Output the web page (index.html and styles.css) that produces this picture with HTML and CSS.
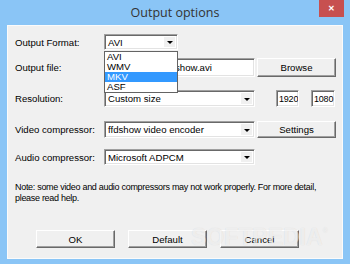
FILE: index.html
```html
<!DOCTYPE html>
<html>
<head>
    <title>Output options</title>
    <meta charset="utf-8" />
    <link rel="stylesheet" href="styles.css">
</head>
<body>
    <div class="window">
        <div class="titlebar">
            <span class="title">Output options</span>
            <div class="close">&#x2715;</div>
        </div>
        <div class="client">
            <div class="row r1">
                <span class="lbl">Output Format:</span>
                <div class="field combo w-short">AVI<span class="arrow"></span></div>
            </div>
            <div class="row r2">
                <span class="lbl">Output file:</span>
                <div class="field w-long path">C:\Video\slideshow.avi</div>
                <div class="btn btn-side">Browse</div>
            </div>
            <div class="row r3">
                <span class="lbl">Resolution:</span>
                <div class="field combo w-long">Custom size<span class="arrow"></span></div>
                <div class="field num n1">1920</div>
                <div class="field num n2">1080</div>
            </div>
            <div class="row r4">
                <span class="lbl">Video compressor:</span>
                <div class="field combo w-long">ffdshow video encoder<span class="arrow"></span></div>
                <div class="btn btn-side">Settings</div>
            </div>
            <div class="row r5">
                <span class="lbl">Audio compressor:</span>
                <div class="field combo w-long">Microsoft ADPCM<span class="arrow"></span></div>
            </div>
            <p class="note">Note: some video and audio compressors may not work properly. For more detail, please read help.</p>
            <div class="buttons">
                <div class="btn">OK</div>
                <div class="btn">Default</div>
                <div class="btn">Cancel</div>
            </div>
            <!-- open dropdown of the format combo -->
            <ul class="droplist">
                <li>AVI</li>
                <li>WMV</li>
                <li class="sel">MKV</li>
                <li>ASF</li>
            </ul>
            <div class="watermark">SOFTPEDIA<sup>&reg;</sup></div>
        </div>
    </div>
</body>
</html>
```

FILE: styles.css
```css
body { margin: 0; background: #88c4f5; font-family: "Liberation Sans", Arial, sans-serif; font-size: 9.6px; color: #000; }
.window { width: 350px; height: 264px; background: #8ac5f6; display: flex; flex-direction: column; overflow: hidden; }
.titlebar { height: 25px; position: relative; display: flex; justify-content: center; }
.title { font-family: "Open Sans", "Noto Sans", sans-serif; font-size: 12.5px; color: #333; line-height: 26px; }
.close { position: absolute; right: 6px; top: 0; width: 25px; height: 17px; background: #c75050; color: #fff; font-size: 8px; font-weight: bold; text-align: center; line-height: 17px; }
.client { position: relative; margin: 0 7px 5px 7px; height: 234px; background: #f0f0f0; box-shadow: inset 0 0 0 1px #fbfbfb; padding-left: 8px; overflow: hidden; }
.row { display: flex; align-items: center; }
.lbl { width: 89px; }
.r1 { padding-top: 9px; height: 16px; }
.r2 { margin-top: 8px; height: 19px; }
.r3 { margin-top: 13px; height: 17px; }
.r4 { margin-top: 14px; height: 17px; }
.r5 { margin-top: 11px; height: 16px; }
.field { position: relative; box-sizing: border-box; height: 100%; background: #fff; border: 1px solid; border-color: #a0a0a0 #fff #fff #a0a0a0; box-shadow: inset 1px 1px 0 #696969, inset -1px -1px 0 #e3e3e3; padding: 0 3px; display: flex; align-items: center; white-space: nowrap; overflow: hidden; }
.path { padding-left: 11px; }
.w-short { width: 74px; }
.w-long { width: 151px; }
.num { width: 24px; padding: 0 1px 0 2px; font-size: 9px; letter-spacing: -0.2px; }
.n1 { margin-left: 21px; width: 23px; }
.n2 { margin-left: 12px; }
.arrow { position: absolute; right: 2px; top: 2px; bottom: 2px; width: 11px; background: #f0f0f0; }
.arrow::after { content: ""; position: absolute; left: 3px; top: 50%; margin-top: -1px; border-left: 3px solid transparent; border-right: 3px solid transparent; border-top: 3px solid #000; }
.btn { box-sizing: border-box; width: 79px; height: 18px; background: #f0f0f0; border: 1px solid; border-color: #fff #696969 #696969 #fff; box-shadow: inset -1px -1px 0 #a0a0a0; display: flex; align-items: center; justify-content: center; }
.btn-side { margin-left: 2px; height: 100%; }
.note { margin: 17px 0 0 0; line-height: 11px; width: 320px; font-size: 9px; letter-spacing: -0.3px; }
.buttons { margin-top: 26px; margin-left: 21px; display: flex; gap: 13px; }
.droplist { position: absolute; left: 97px; top: 26px; width: 74px; box-sizing: border-box; margin: 0; padding: 0; list-style: none; background: #fff; border: 1px solid #646464; }
.droplist li { height: 10px; line-height: 10px; padding-left: 2px; }
.droplist .sel { background: #3399ff; color: #fff; }
.watermark { position: absolute; left: 184px; top: 199px; font-family: "Liberation Sans", Arial, sans-serif; font-weight: bold; font-size: 23px; color: rgba(255, 255, 255, 0.6); text-shadow: 0 0 1px rgba(0, 0, 0, 0.12); }
.watermark sup { font-size: 7px; font-weight: normal; vertical-align: 12px; }
```
